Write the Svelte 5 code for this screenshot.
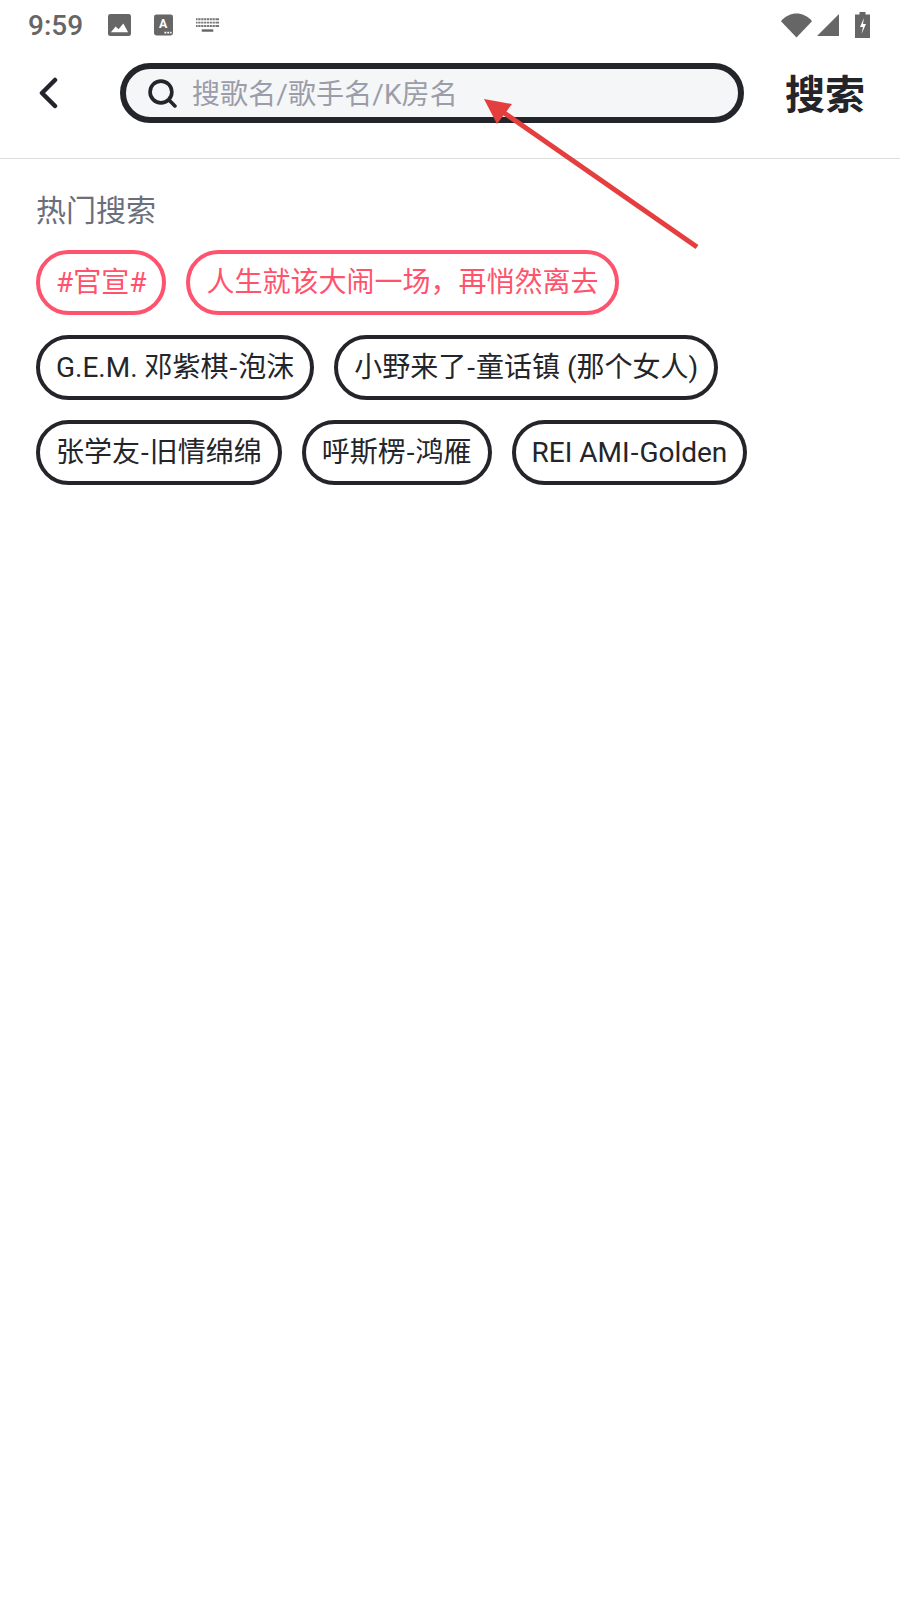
<script>
    const rows = [
        { hot: true, items: ['#官宣#', '人生就该大闹一场，再悄然离去'] },
        { hot: false, items: ['G.E.M. 邓紫棋-泡沫', '小野来了-童话镇 (那个女人)'] },
        { hot: false, items: ['张学友-旧情绵绵', '呼斯楞-鸿雁', 'REI AMI-Golden'] }
    ];
</script>

<div class="page">
    <div class="status">
        <span class="time">9:59</span>
        <svg class="ic-img" viewBox="0 0 24 24"><rect width="24" height="23" rx="2.5" fill="#666"/><path d="M3 19l5-6 3 3 5-6 5 9z" fill="#fff"/></svg>
        <svg class="ic-a" viewBox="0 0 20 22"><rect width="20" height="22" rx="2.5" fill="#666"/><text x="9.5" y="14" font-size="13" font-weight="700" font-family="Roboto" text-anchor="middle" fill="#fff">A</text><path d="M11 18h2v2h-2zM14 18h2v2h-2zM17 18h1.5v2H17z" fill="#fff"/></svg>
        <svg class="ic-kb" viewBox="0 0 26 16"><path d="M1 1h24v2H1zM1 4.500h24v2H1zM1 8h24v2H1z" fill="#777"/><path d="M3 1v9M6 1v9M9 1v9M12 1v9M15 1v9M18 1v9M21 1v9" stroke="#fff" stroke-width=".7"/><path d="M7 12.500h12v2.500H7z" fill="#666"/></svg>
        <span class="grow"></span>
        <svg class="ic-wifi" viewBox="0 0 32 25"><path d="M0 8C9-2.500 23-2.500 32 8L16 25z" fill="#666"/></svg>
        <svg class="ic-signal" viewBox="0 0 22 22"><path d="M22 0v22H0z" fill="#666"/></svg>
        <svg class="ic-batt" viewBox="0 0 15 26"><path d="M4.500 0h6v2.500H15V26H0V2.500h4.500z" fill="#666"/><path d="M9 6l-4 9h3l-1.500 7 4.500-10H8z" fill="#fff"/></svg>
    </div>

    <header>
        <svg class="back" viewBox="0 0 20 32"><path d="M17 3 4 16l13 13" fill="none" stroke="#24252a" stroke-width="4.500" stroke-linecap="round" stroke-linejoin="round"/></svg>
        <div class="search">
            <svg class="lens" viewBox="0 0 28 28"><circle cx="12.500" cy="12.500" r="10.500" fill="none" stroke="#24252a" stroke-width="3.500"/><path d="M21 21 26 26" stroke="#24252a" stroke-width="3.500" stroke-linecap="round"/></svg>
            <span class="placeholder">搜歌名/歌手名/K房名</span>
        </div>
        <span class="go">搜索</span>
    </header>

    <section>
        <h2>热门搜索</h2>
        <div class="tags">
            {#each rows as row}
                <div class="row">
                    {#each row.items as t}
                        <span class="tag" class:hot={row.hot}>
                            {#each t.split('-') as part, j}{#if j > 0}<span class="dash">-</span>{/if}{part}{/each}
                        </span>
                    {/each}
                </div>
            {/each}
        </div>
    </section>

    <!-- annotation arrow drawn over the screenshot -->
    <svg class="arrow" viewBox="0 0 900 1600">
        <path d="M697 247 500 110" stroke="#e53e3e" stroke-width="5" fill="none"/>
        <path d="M484 99 512 104 497 124z" fill="#e53e3e"/>
    </svg>
</div>

<style>
    :global(body) {
        margin: 0;
        background: #fff;
    }
    .page {
        position: relative;
        width: 900px;
        height: 1600px;
        background: #fff;
        font-family: Roboto, "Noto Sans CJK SC", sans-serif;
        color: #24252a;
        overflow: hidden;
    }
    .status {
        display: flex;
        align-items: center;
        height: 50px;
        padding: 0 30px 0 28px;
        box-sizing: border-box;
    }
    .time {
        font-size: 28px;
        font-weight: 500;
        color: #666;
        width: 80px;
    }
    .grow {
        flex: 1;
    }
    .status svg {
        display: block;
    }
    .ic-img {
        width: 23px;
        height: 23px;
    }
    .ic-a {
        width: 19px;
        height: 22px;
        margin-left: 23px;
    }
    .ic-kb {
        width: 25px;
        height: 16px;
        margin-left: 22px;
    }
    .ic-wifi {
        width: 31px;
        height: 25px;
    }
    .ic-signal {
        width: 22px;
        height: 22px;
        margin-left: 5px;
    }
    .ic-batt {
        width: 15px;
        height: 26px;
        margin-left: 16px;
    }
    header {
        display: flex;
        align-items: center;
        height: 109px;
        box-sizing: border-box;
        padding: 0 0 22px 38px;
        border-bottom: 1px solid #ddd;
    }
    .back {
        flex: none;
        width: 20px;
        height: 32px;
        margin-right: 62px;
    }
    .search {
        flex: none;
        display: flex;
        align-items: center;
        width: 624px;
        height: 60px;
        box-sizing: border-box;
        border: 6px solid #24252a;
        border-radius: 30px;
        background: #f5f6f8;
        padding-left: 22px;
    }
    .lens {
        width: 29px;
        height: 29px;
        margin-right: 15px;
    }
    .placeholder {
        font-size: 28px;
        color: #9b9da8;
        margin-top: -2px;
        letter-spacing: 0.1px;
    }
    .go {
        font-size: 40px;
        font-weight: 700;
        margin-left: 41px;
        margin-top: -2px;
        white-space: nowrap;
    }
    section {
        padding: 32px 36px 0;
    }
    h2 {
        margin: 0 0 19px;
        font-size: 30px;
        font-weight: 400;
        line-height: 40px;
        color: #6b6e7b;
    }
    .tags {
        display: flex;
        flex-direction: column;
        gap: 20px;
    }
    .row {
        display: flex;
        gap: 20px;
    }
    .tag {
        height: 65px;
        box-sizing: border-box;
        border: 4px solid #24252a;
        border-radius: 33px;
        padding: 0 16px;
        font-size: 28px;
        line-height: 57px;
        white-space: nowrap;
    }
    .tag.hot {
        border-color: #ff526d;
        color: #ff526d;
    }
    .dash {
        margin: 0 1px;
    }
    .arrow {
        position: absolute;
        inset: 0;
        width: 900px;
        height: 1600px;
        pointer-events: none;
    }
</style>
